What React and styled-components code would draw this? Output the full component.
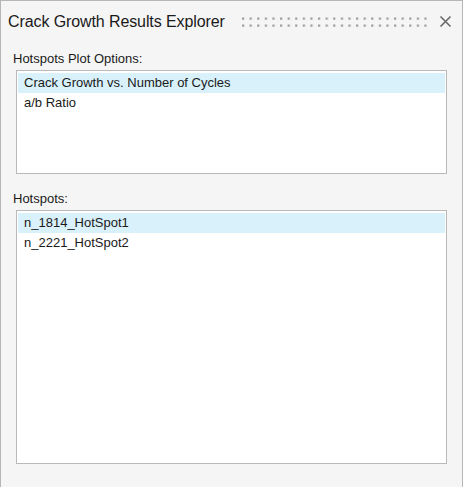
import styled, { createGlobalStyle } from "styled-components";

const GlobalStyle = createGlobalStyle`
  html, body {
    margin: 0;
    padding: 0;
    background: #f5f5f5;
  }
  * {
    box-sizing: border-box;
  }
`;

const Window = styled.div`
  height: 487px;
  background: #f5f5f5;
  border: 1px solid #b6b6b6;
  border-bottom: none;
  font-family: "Liberation Sans", Arial, sans-serif;
  color: #1a1a1a;
  display: flex;
  flex-direction: column;
`;

const Header = styled.div`
  height: 41px;
  display: flex;
  align-items: center;
  padding: 0 10px 0 7px;
`;

const Title = styled.span`
  font-size: 16px;
  letter-spacing: -0.1px;
  white-space: nowrap;
`;

const Grip = styled.svg`
  flex: 1;
  height: 10px;
  margin: 0 12px 0 17px;
`;

const CloseButton = styled.button`
  border: none;
  background: none;
  padding: 0;
  width: 13px;
  height: 13px;
  display: flex;
  cursor: pointer;
`;

const Content = styled.div`
  padding: 9px 15px 0 12px;
  display: flex;
  flex-direction: column;
`;

const Label = styled.div`
  font-size: 13px;
  line-height: 15px;
  margin-bottom: 4px;
  margin-top: ${(p) => p.$offset || 0}px;
`;

const ListBox = styled.ul`
  list-style: none;
  margin: 0 0 0 3px;
  padding: 2px 1px;
  height: ${(p) => p.$height}px;
  background: #fff;
  border: 1px solid #b9b9b9;
`;

const ListItem = styled.li`
  height: 20px;
  line-height: 19px;
  padding-left: 6px;
  font-size: 13px;
  background: ${(p) => (p.$selected ? "#d9f1fb" : "transparent")};
  cursor: default;
`;

function ListSection({ label, items, height, offset }) {
  return (
    <>
      <Label $offset={offset}>{label}</Label>
      <ListBox $height={height}>
        {items.map((item, index) => (
          <ListItem key={item} $selected={index === 0}>
            {item}
          </ListItem>
        ))}
      </ListBox>
    </>
  );
}

export default function App() {
  return (
    <>
      <GlobalStyle />
      <Window>
        <Header>
          <Title>Crack Growth Results Explorer</Title>
          <Grip>
            <defs>
              <pattern id="grip" width="7.6" height="10" patternUnits="userSpaceOnUse">
                <rect x="0" y="0.5" width="2.2" height="2.2" fill="#9c9c9c" />
                <rect x="0" y="7.5" width="2.2" height="2.2" fill="#9c9c9c" />
              </pattern>
            </defs>
            <rect width="100%" height="100%" fill="url(#grip)" />
          </Grip>
          <CloseButton aria-label="Close">
            <svg width="13" height="13" viewBox="0 0 13 13">
              <path d="M1.5 1.5 L11.5 11.5 M11.5 1.5 L1.5 11.5" stroke="#6a6a6a" strokeWidth="1.6" />
            </svg>
          </CloseButton>
        </Header>
        <Content>
          <ListSection
            label="Hotspots Plot Options:"
            items={["Crack Growth vs. Number of Cycles", "a/b Ratio"]}
            height={104}
          />
          <ListSection
            label="Hotspots:"
            offset={17}
            items={["n_1814_HotSpot1", "n_2221_HotSpot2"]}
            height={254}
          />
        </Content>
      </Window>
    </>
  );
}
